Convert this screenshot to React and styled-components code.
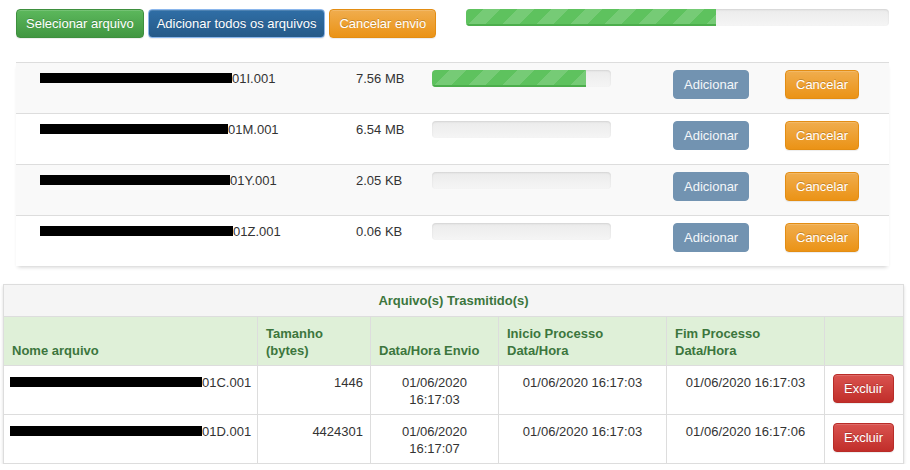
import React from 'react';
import styled, { createGlobalStyle, css } from 'styled-components';

const GlobalStyle = createGlobalStyle`
  body {
    margin: 0;
    background: #fff;
    font-family: "Liberation Sans", Arial, sans-serif;
    font-size: 13px;
    color: #333;
  }
`;

const variants = {
  success: css`
    background-image: linear-gradient(to bottom, #5cb85c 0, #419641 100%);
    border-color: #3e8f3e;
  `,
  primary: css`
    background-image: linear-gradient(to bottom, #337ab7 0, #265a88 100%);
    border-color: #245580;
  `,
  focused: css`
    background-image: linear-gradient(to bottom, #2f6ea6 0, #265a88 100%);
    border-color: #8ab6ec;
  `,
  warning: css`
    background-image: linear-gradient(to bottom, #f0ad4e 0, #eb9316 100%);
    border-color: #e38d13;
  `,
  danger: css`
    background-image: linear-gradient(to bottom, #d9534f 0, #c12e2a 100%);
    border-color: #b92c28;
  `,
  muted: css`
    background: #7293b1;
    border-color: #7293b1;
    box-shadow: none;
    text-shadow: none;
    color: #f4f7fa;
  `,
};

const Button = styled.button`
  height: 29px;
  padding: 0 ${(p) => p.$pad || 10}px;
  font-family: "Liberation Sans", Arial, sans-serif;
  font-size: 13px;
  color: #fff;
  border: 1px solid;
  border-radius: 4px;
  text-shadow: 0 -1px 0 rgba(0, 0, 0, 0.2);
  box-shadow: inset 0 1px 0 rgba(255, 255, 255, 0.15), 0 1px 1px rgba(0, 0, 0, 0.075);
  white-space: nowrap;
  cursor: pointer;
  ${(p) => variants[p.$variant]}
`;

const Page = styled.div`
  padding: 9px 6px 0 3px;
`;

const Toolbar = styled.div`
  display: flex;
  align-items: flex-start;
  gap: 4px;
  margin-left: 13px;
`;

const TopProgress = styled.div`
  margin-left: 26px;
`;

const Progress = styled.div`
  width: ${(p) => p.$w}px;
  height: 17px;
  border-radius: 4px;
  overflow: hidden;
  background-image: linear-gradient(to bottom, #ebebeb 0, #f5f5f5 100%);
  box-shadow: inset 0 1px 2px rgba(0, 0, 0, 0.1);
`;

const Bar = styled.div`
  height: 100%;
  background-color: #5ec25e;
  background-image: linear-gradient(
    -45deg,
    rgba(255, 255, 255, 0.15) 25%,
    transparent 25%,
    transparent 50%,
    rgba(255, 255, 255, 0.15) 50%,
    rgba(255, 255, 255, 0.15) 75%,
    transparent 75%,
    transparent
  );
  background-size: 34px 34px;
  box-shadow: inset 0 -2px 0 #4cae4c;
`;

const FileList = styled.div`
  width: 873px;
  margin: 24px 0 0 13px;
  box-shadow: 0 3px 4px -2px rgba(0, 0, 0, 0.2);
`;

const FileRow = styled.div`
  display: grid;
  grid-template-columns: 332px 76px 241px 112px 112px;
  height: 51px;
  box-sizing: border-box;
  border-top: 1px solid #ddd;
  background: ${(p) => (p.$striped ? '#f9f9f9' : '#fff')};
`;

const FileCell = styled.div`
  padding: 7px 8px 0 ${(p) => p.$pl || 8}px;
  line-height: 18px;
  white-space: nowrap;
`;

const Redacted = styled.span`
  display: inline-block;
  height: 10px;
  background: #000;
  vertical-align: baseline;
`;

const SentTable = styled.table`
  width: 900px;
  margin-top: 18px;
  border-collapse: collapse;
  table-layout: fixed;
  border: 1px solid #ddd;
  box-shadow: 0 2px 3px rgba(0, 0, 0, 0.15);
`;

const TitleCell = styled.th`
  padding: 7px 8px;
  line-height: 17px;
  background: #f5f5f5;
  color: #3c763d;
  font-weight: bold;
  text-align: center;
  border: 1px solid #ddd;
`;

const HeadCell = styled.th`
  padding: 8px 8px 6px;
  line-height: 17px;
  background: #dff0d8;
  color: #3c763d;
  font-weight: bold;
  text-align: left;
  vertical-align: bottom;
  border: 1px solid #ddd;
`;

const DataCell = styled.td`
  padding: 8px ${(p) => (p.$align === 'right' ? 7 : 8)}px 6px ${(p) => p.$pl || 8}px;
  line-height: 17px;
  text-align: ${(p) => p.$align || 'left'};
  vertical-align: top;
  border: 1px solid #ddd;
  white-space: ${(p) => (p.$nowrap ? 'nowrap' : 'normal')};
`;

const pending = [
  { bar: 192, name: '01I.001', size: '7.56 MB', progress: 86 },
  { bar: 188, name: '01M.001', size: '6.54 MB', progress: 0 },
  { bar: 190, name: '01Y.001', size: '2.05 KB', progress: 0 },
  { bar: 193, name: '01Z.001', size: '0.06 KB', progress: 0 },
];

const sent = [
  { bar: 192, name: '01C.001', size: '1446', sentAt: ['01/06/2020', '16:17:03'], start: '01/06/2020 16:17:03', end: '01/06/2020 16:17:03' },
  { bar: 192, name: '01D.001', size: '4424301', sentAt: ['01/06/2020', '16:17:07'], start: '01/06/2020 16:17:03', end: '01/06/2020 16:17:06' },
];

const App = () => (
  <>
    <GlobalStyle />
    <Page>
      <Toolbar>
        <Button $variant="success" $pad={9}>Selecionar arquivo</Button>
        <Button $variant="focused" $pad={8}>Adicionar todos os arquivos</Button>
        <Button $variant="warning" $pad={9}>Cancelar envio</Button>
        <TopProgress>
          <Progress $w={423}>
            <Bar style={{ width: '59%' }} />
          </Progress>
        </TopProgress>
      </Toolbar>

      <FileList>
        {pending.map((f, i) => (
          <FileRow key={f.name} $striped={i % 2 === 0}>
            <FileCell $pl={24}>
              <Redacted style={{ width: f.bar }} />
              {f.name}
            </FileCell>
            <FileCell>{f.size}</FileCell>
            <FileCell>
              <Progress $w={179}>
                {f.progress > 0 && <Bar style={{ width: `${f.progress}%` }} />}
              </Progress>
            </FileCell>
            <FileCell>
              <Button $variant="muted">Adicionar</Button>
            </FileCell>
            <FileCell>
              <Button $variant="warning">Cancelar</Button>
            </FileCell>
          </FileRow>
        ))}
      </FileList>

      <SentTable>
        <colgroup>
          <col style={{ width: 254 }} />
          <col style={{ width: 113 }} />
          <col style={{ width: 128 }} />
          <col style={{ width: 168 }} />
          <col style={{ width: 158 }} />
          <col style={{ width: 79 }} />
        </colgroup>
        <thead>
          <tr>
            <TitleCell colSpan={6}>Arquivo(s) Trasmitido(s)</TitleCell>
          </tr>
          <tr>
            <HeadCell>Nome arquivo</HeadCell>
            <HeadCell>Tamanho<br />(bytes)</HeadCell>
            <HeadCell>Data/Hora Envio</HeadCell>
            <HeadCell>Inicio Processo<br />Data/Hora</HeadCell>
            <HeadCell>Fim Processo<br />Data/Hora</HeadCell>
            <HeadCell />
          </tr>
        </thead>
        <tbody>
          {sent.map((f) => (
            <tr key={f.name}>
              <DataCell $pl={6} $nowrap>
                <Redacted style={{ width: f.bar }} />
                {f.name}
              </DataCell>
              <DataCell $align="right">{f.size}</DataCell>
              <DataCell $align="center">
                {f.sentAt[0]}
                <br />
                {f.sentAt[1]}
              </DataCell>
              <DataCell $align="center" $nowrap>{f.start}</DataCell>
              <DataCell $align="center" $nowrap>{f.end}</DataCell>
              <DataCell>
                <Button $variant="danger">Excluir</Button>
              </DataCell>
            </tr>
          ))}
        </tbody>
      </SentTable>
    </Page>
  </>
);

export default App;
